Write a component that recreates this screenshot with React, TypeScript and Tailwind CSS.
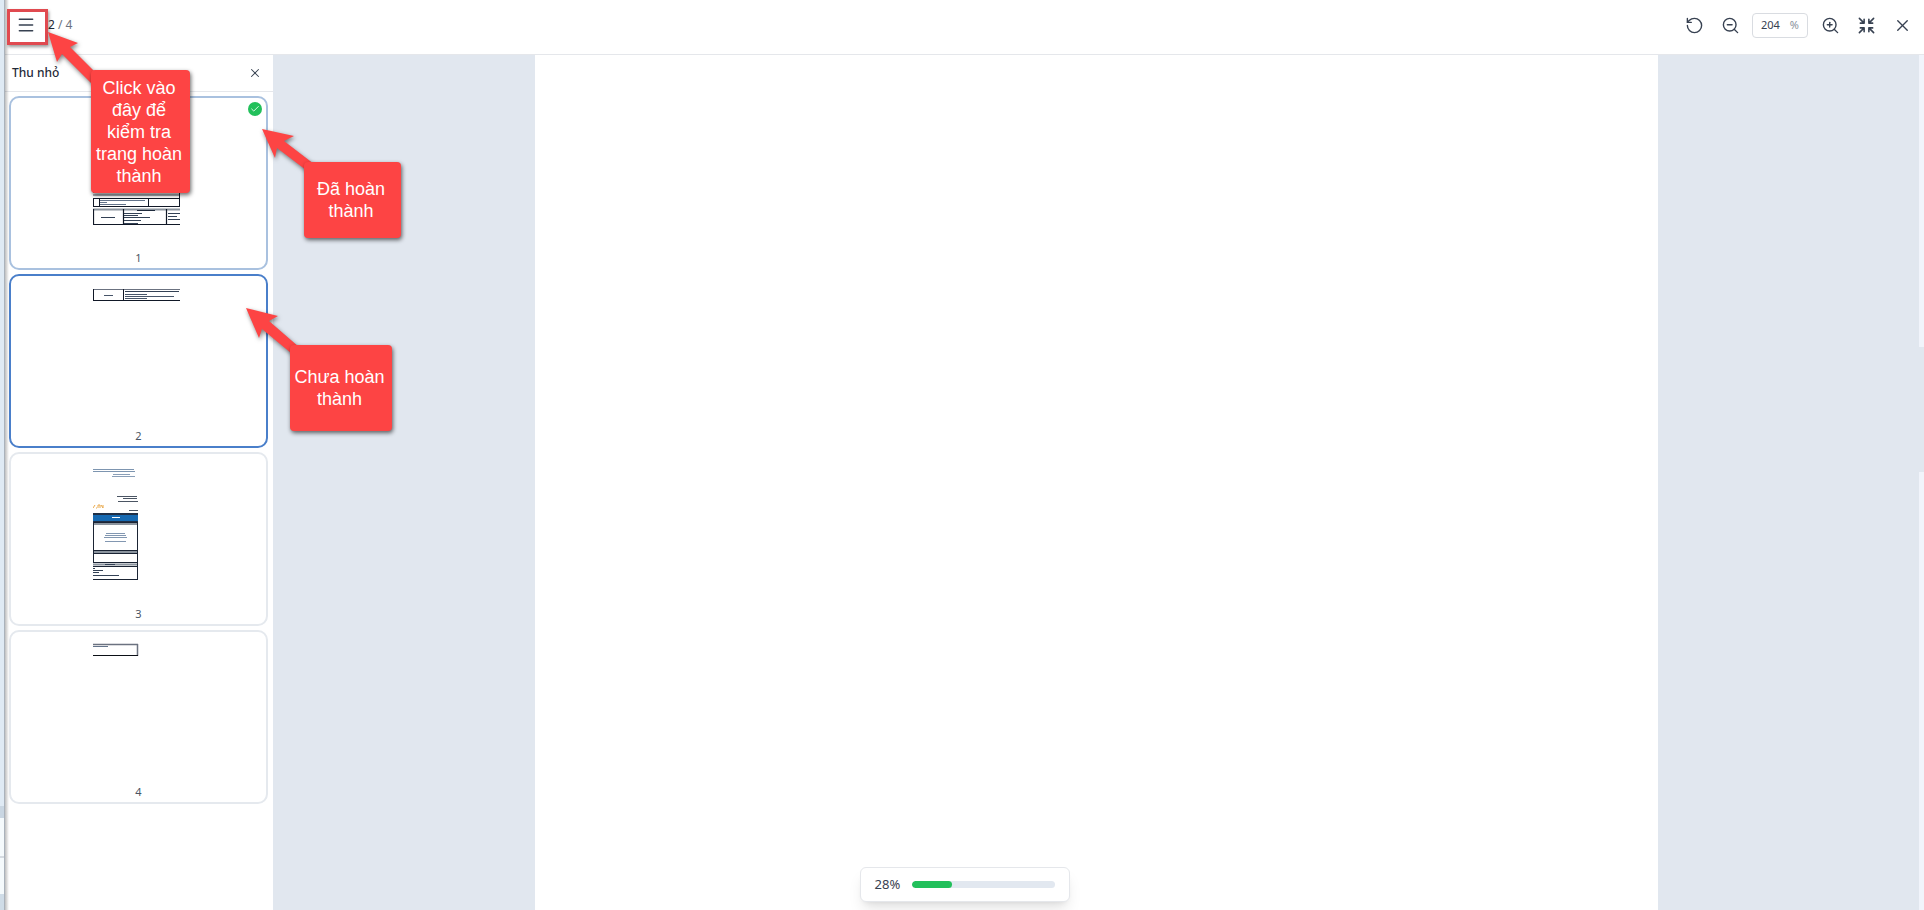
import React, { useState } from 'react';
import { Check, Menu, RotateCcw, Shrink, X, ZoomIn, ZoomOut } from 'lucide-react';

type PageStatus = 'done' | 'active' | 'idle';

interface ThumbnailProps {
  page: number;
  status: PageStatus;
  onSelect: (page: number) => void;
  children: React.ReactNode;
}

const TOTAL_PAGES = 4;

const borderByStatus: Record<PageStatus, string> = {
  done: 'border-[#a9c1df]',
  active: 'border-[#4a7fca]',
  idle: 'border-[#e5e9ee]',
};

function Thumbnail({ page, status, onSelect, children }: ThumbnailProps) {
  return (
    <button
      type="button"
      onClick={() => onSelect(page)}
      className={`relative flex w-full flex-col items-center rounded-[10px] border-2 bg-white pt-2 pb-0.5 ${borderByStatus[status]}`}
    >
      <svg width="92" height="140" viewBox="0 0 92 140" fill="none" aria-hidden="true">
        {children}
      </svg>
      <span className="mt-1 text-[11px] leading-4 text-[#4b5563]">{page}</span>
      {status === 'done' && (
        <span className="absolute top-1 right-1 flex h-3.5 w-3.5 items-center justify-center rounded-full bg-[#22c05b] text-white">
          <Check className="h-2.5 w-2.5" />
        </span>
      )}
    </button>
  );
}

function PageOne() {
  return (
    <>
      <path d="M0 86.5H87M0 89H87" stroke="#59636e" />
      <path d="M0.5 92.5H87M0 100.5H87M0.5 92V101M6.5 92V101M55.5 92V101M86.5 84V101" stroke="#111827" />
      <path d="M7 94.5H52M7 96.5H14M7 98.5H33" stroke="#64748b" />
      <path d="M0 103.5H87" stroke="#8b949e" strokeWidth="2" />
      <path d="M44 104.5H62" stroke="#1e293b" />
      <path d="M0.5 103V119M30.5 103V119M73.5 103V119M0 118.5H87" stroke="#111827" strokeWidth="1.2" />
      <path
        d="M8 111.5H22M31 107.5H49M31 109.5H45M31 111.5H57M31 114.5H48M31 117.5H45M75 107.5H87M75 110.5H84M75 113.5H87"
        stroke="#334155"
      />
    </>
  );
}

function PageTwo() {
  return (
    <>
      <path d="M0 5.5H87" stroke="#6b7280" />
      <path d="M0.5 5V17M30.5 5V17M0 16.5H87" stroke="#111827" />
      <path d="M32 7.5H86" stroke="#334155" />
      <path d="M11 11.5H20M32 10.5H54M32 12.5H81M32 14.5H54" stroke="#475569" />
    </>
  );
}

function PageThree() {
  return (
    <>
      <path d="M0 7.5H41M0 9.5H42" stroke="#7d95b0" />
      <path d="M20 12.5H37M19 14.5H42" stroke="#8a9fb8" />
      <path d="M24 34.5H44M30 36.5H44M25 39.5H45M36 48.5H45" stroke="#4b5563" />
      <path d="M0 46L2 43M3 46H4M5 46V43H7V46M8 43L10 46M10 43V46" stroke="#e9a94c" />
      <rect x="0" y="51" width="45" height="9" fill="#1f2f46" />
      <rect x="0" y="53" width="45" height="6" fill="#1669b1" />
      <path d="M19 55.5H27" stroke="#fff" />
      <path d="M0 62H45M0 90H45M0 102.5H45" stroke="#8b949e" strokeWidth="2" />
      <path
        d="M0.5 60V100M44.5 60V118M0 60.5H45M0 88.5H45M0 91.5H45M0 100.5H45M0 104.5H45M0 117.5H45"
        stroke="#1b2434"
      />
      <path d="M13 71.5H32M12 73.5H33M11 75.5H34M12 79.5H33" stroke="#8297b1" />
      <path d="M12 102.5H22M0 106.5H2M0 108.5H10M0 110.5H6M0 113.5H26" stroke="#334155" />
    </>
  );
}

function PageFour() {
  return (
    <>
      <path d="M0 4.5H45M44.5 4V16" stroke="#6b7280" strokeWidth="1.5" />
      <path d="M0 6.5H15" stroke="#64748b" />
      <path d="M0 15.5H45" stroke="#0b0f16" />
    </>
  );
}

const pages = [
  { page: 1, Content: PageOne },
  { page: 2, Content: PageTwo },
  { page: 3, Content: PageThree },
  { page: 4, Content: PageFour },
];

function Arrow({ points }: { points: string }) {
  return <polygon points={points} fill="#fd4444" />;
}

function Annotations() {
  const note =
    'absolute flex items-center justify-center rounded-sm bg-[#fd4444] pr-[3px] text-center font-["Liberation_Sans",Arial,sans-serif] text-lg leading-[22px] text-white shadow-[1px_2px_4px_rgba(0,0,0,0.6)]';

  return (
    <div className="pointer-events-none absolute inset-0">
      <div className="absolute top-[9px] left-[7px] h-9 w-[41px] border-3 border-[#e04a50] shadow-[1px_2px_3px_rgba(0,0,0,0.4)]" />
      <svg
        width="420"
        height="450"
        viewBox="0 0 420 450"
        className="absolute top-0 left-0 drop-shadow-[1px_2px_2px_rgba(0,0,0,0.5)]"
        aria-hidden="true"
      >
        <Arrow points="48,32 78,43 70,47 94,71 94,86 62,54 57,62" />
        <Arrow points="262,129 294,136 284,141 314,164 306,170 277,148 275,158" />
        <Arrow points="246,308 278,316 269,321 299,347 291,353 262,329 259,338" />
      </svg>
      <div className={`${note} top-[70px] left-[91px] h-[123px] w-[99px]`}>
        Click vào
        <br />
        đây để
        <br />
        kiểm tra
        <br />
        trang hoàn
        <br />
        thành
      </div>
      <div className={`${note} top-[162px] left-[304px] h-[76px] w-[97px]`}>
        Đã hoàn
        <br />
        thành
      </div>
      <div className={`${note} top-[345px] left-[290px] h-[86px] w-[102px]`}>
        Chưa hoàn
        <br />
        thành
      </div>
    </div>
  );
}

export default function App() {
  const [zoom, setZoom] = useState(204);
  const [current, setCurrent] = useState(2);
  const [showThumbs, setShowThumbs] = useState(true);
  const progress = 28;

  const iconButton = 'flex h-7 w-7 items-center justify-center rounded text-[#374151] hover:bg-gray-100';

  const statusOf = (page: number): PageStatus => {
    if (page === current) return 'active';
    return page === 1 ? 'done' : 'idle';
  };

  return (
    <div className='relative flex h-screen overflow-hidden bg-white font-["Noto_Sans",sans-serif] text-[#374151]'>
      {/* edge of the page behind the viewer */}
      <div className="flex w-[5px] shrink-0 flex-col border-r border-[#aab2bb] bg-[#dfeaf4]">
        <div className="mt-auto h-3 bg-[#c9d6e2]" />
        <div className="h-10 border-b-2 border-[#d5dbe1] bg-[#f5fafc]" />
        <div className="h-9 bg-[#f5fafc]" />
        <div className="h-4 bg-[#cfdce7]" />
      </div>
      <div className="relative flex min-w-0 flex-1 flex-col bg-white">
        <header className="flex h-[55px] shrink-0 items-center justify-between border-b border-[#e5e7eb] pr-2 pb-1 pl-[7px]">
          <div className="flex items-center gap-2">
            <button type="button" aria-label="Menu" className={iconButton} onClick={() => setShowThumbs(!showThumbs)}>
              <Menu className="h-5 w-5" strokeWidth={1.75} />
            </button>
            <span className="text-xs text-[#6b7280]">
              <span className="text-[#1f2937]">{current}</span> / {TOTAL_PAGES}
            </span>
          </div>
          <div className="flex items-center gap-2">
            <button type="button" aria-label="Reset" className={iconButton} onClick={() => setZoom(100)}>
              <RotateCcw className="h-[19px] w-[19px]" strokeWidth={1.75} />
            </button>
            <button type="button" aria-label="Zoom out" className={iconButton} onClick={() => setZoom(zoom - 10)}>
              <ZoomOut className="h-[19px] w-[19px]" strokeWidth={1.75} />
            </button>
            <label className="flex h-[25px] w-14 items-center rounded border border-[#d9dce1] px-2 text-[11px]">
              <input
                aria-label="Zoom"
                value={zoom}
                onChange={(e) => setZoom(Number(e.target.value) || 0)}
                className="w-0 min-w-0 flex-1 bg-transparent outline-none"
              />
              <span className="text-[#8b929d]">%</span>
            </label>
            <button type="button" aria-label="Zoom in" className={iconButton} onClick={() => setZoom(zoom + 10)}>
              <ZoomIn className="h-[19px] w-[19px]" strokeWidth={1.75} />
            </button>
            <button type="button" aria-label="Shrink" className={iconButton}>
              <Shrink className="h-[19px] w-[19px]" />
            </button>
            <button type="button" aria-label="Close" className={iconButton}>
              <X className="h-[19px] w-[19px]" strokeWidth={1.75} />
            </button>
          </div>
        </header>

        <div className="flex min-h-0 flex-1">
          {showThumbs && (
            <aside className="flex w-[268px] shrink-0 flex-col bg-white">
              <div className="flex h-[37px] items-center justify-between border-b border-[#e5e7eb] pr-[11px] pl-[7px]">
                <h2 className="text-xs font-medium text-[#1f2937]">Thu nhỏ</h2>
                <button type="button" aria-label="Close" onClick={() => setShowThumbs(false)}>
                  <X className="h-3.5 w-3.5" strokeWidth={1.75} />
                </button>
              </div>
              <div className="flex flex-col gap-1 pt-1 pr-[5px] pl-1">
                {pages.map(({ page, Content }) => (
                  <Thumbnail key={page} page={page} status={statusOf(page)} onSelect={setCurrent}>
                    <Content />
                  </Thumbnail>
                ))}
              </div>
            </aside>
          )}
          <main className="flex min-w-0 flex-1 justify-center bg-[#e1e7ef]">
            <div className="w-[1123px] bg-white" />
          </main>
          <div className="flex w-[5px] shrink-0 flex-col bg-[#f1f4fb]">
            <div className="mt-[292px] h-[125px] bg-[#e1e7ef]" />
          </div>
        </div>

        <div className="absolute bottom-2 left-1/2 flex h-[35px] w-[210px] -translate-x-1/2 items-center gap-3 rounded-md border border-[#e5e7eb] bg-white px-3.5 shadow-lg">
          <span className="text-[13px]">{progress}%</span>
          <div className="h-[7px] flex-1 overflow-hidden rounded-full bg-[#e2e8f0]">
            <div className="h-full rounded-full bg-[#22c05b]" style={{ width: `${progress}%` }} />
          </div>
        </div>

        {/* soft shade along the left edge */}
        <div className="pointer-events-none absolute inset-y-0 left-0 w-1 bg-linear-to-r from-black/25 to-transparent" />
      </div>

      <Annotations />
    </div>
  );
}
